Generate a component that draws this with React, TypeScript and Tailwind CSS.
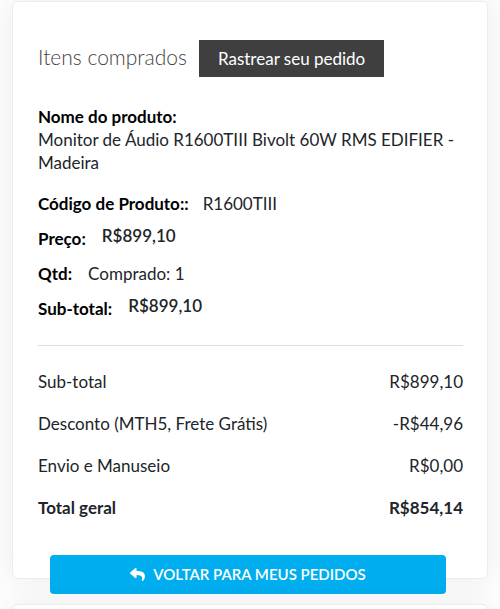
import { FaReply } from "react-icons/fa";

const details = [
  { label: "Código de Produto::", value: "R1600TIII", gap: "gap-[14px]", style: "" },
  { label: "Preço:", value: "R$899,10", gap: "gap-4", style: "pb-1.5 font-semibold" },
  { label: "Qtd:", value: "Comprado: 1", gap: "gap-4", style: "" },
  { label: "Sub-total:", value: "R$899,10", gap: "gap-4", style: "pb-1.5 font-semibold" },
];

const totals = [
  { label: "Sub-total", value: "R$899,10", style: "font-normal" },
  { label: "Desconto (MTH5, Frete Grátis)", value: "-R$44,96", style: "font-normal" },
  { label: "Envio e Manuseio", value: "R$0,00", style: "font-normal" },
  { label: "Total geral", value: "R$854,14", style: "font-bold" },
];

export default function App() {
  return (
    <main className="h-screen overflow-hidden bg-[#fdfdfd] px-3 pt-px font-['Lato',sans-serif] text-[17px] leading-[23px] text-[#212529]">
      <section className="rounded-md border border-[#ececec] bg-white pt-[38px] pr-6 pl-[25px] shadow-[0_0_30px_rgba(0,0,0,0.07)]">
        <header className="flex items-center gap-3">
          <h1 className="pb-1 text-[21px] font-light text-[#444]">Itens comprados</h1>
          <button type="button" className="h-[37px] bg-[#3f3f3f] px-[19px] text-white">Rastrear seu pedido</button>
        </header>
        <div className="pt-7">
          <h2 className="font-bold text-black">Nome do produto:</h2>
          <p>Monitor de Áudio R1600TIII Bivolt 60W RMS EDIFIER - Madeira</p>
        </div>
        <dl className="mt-3 border-b border-[#ddd] pb-[19px]">
          {details.map((item) => (
            <div key={item.label} className={`flex h-[35px] items-center ${item.gap}`}>
              <dt className="font-bold text-black">{item.label}</dt>
              <dd className={item.style}>{item.value}</dd>
            </div>
          ))}
        </dl>
        <table className="mt-[14px] w-full">
          <tbody>
            {totals.map((row) => (
              <tr key={row.label} className="h-[42px]">
                <th scope="row" className={`text-left ${row.style}`}>{row.label}</th>
                <td className={`text-right ${row.style}`}>{row.value}</td>
              </tr>
            ))}
          </tbody>
        </table>
        <div className="mt-[27px] -mb-4 pr-[17px] pl-3">
          <button type="button" className="flex h-[39px] w-full items-center justify-center gap-2 rounded bg-[#00aeef] text-[15px] font-semibold text-white">
            <FaReply aria-hidden="true" />
            VOLTAR PARA MEUS PEDIDOS
          </button>
        </div>
      </section>
      <section className="mt-[25px] h-10 rounded-md border border-[#ececec] bg-white shadow-[0_0_30px_rgba(0,0,0,0.07)]" />
    </main>
  );
}
